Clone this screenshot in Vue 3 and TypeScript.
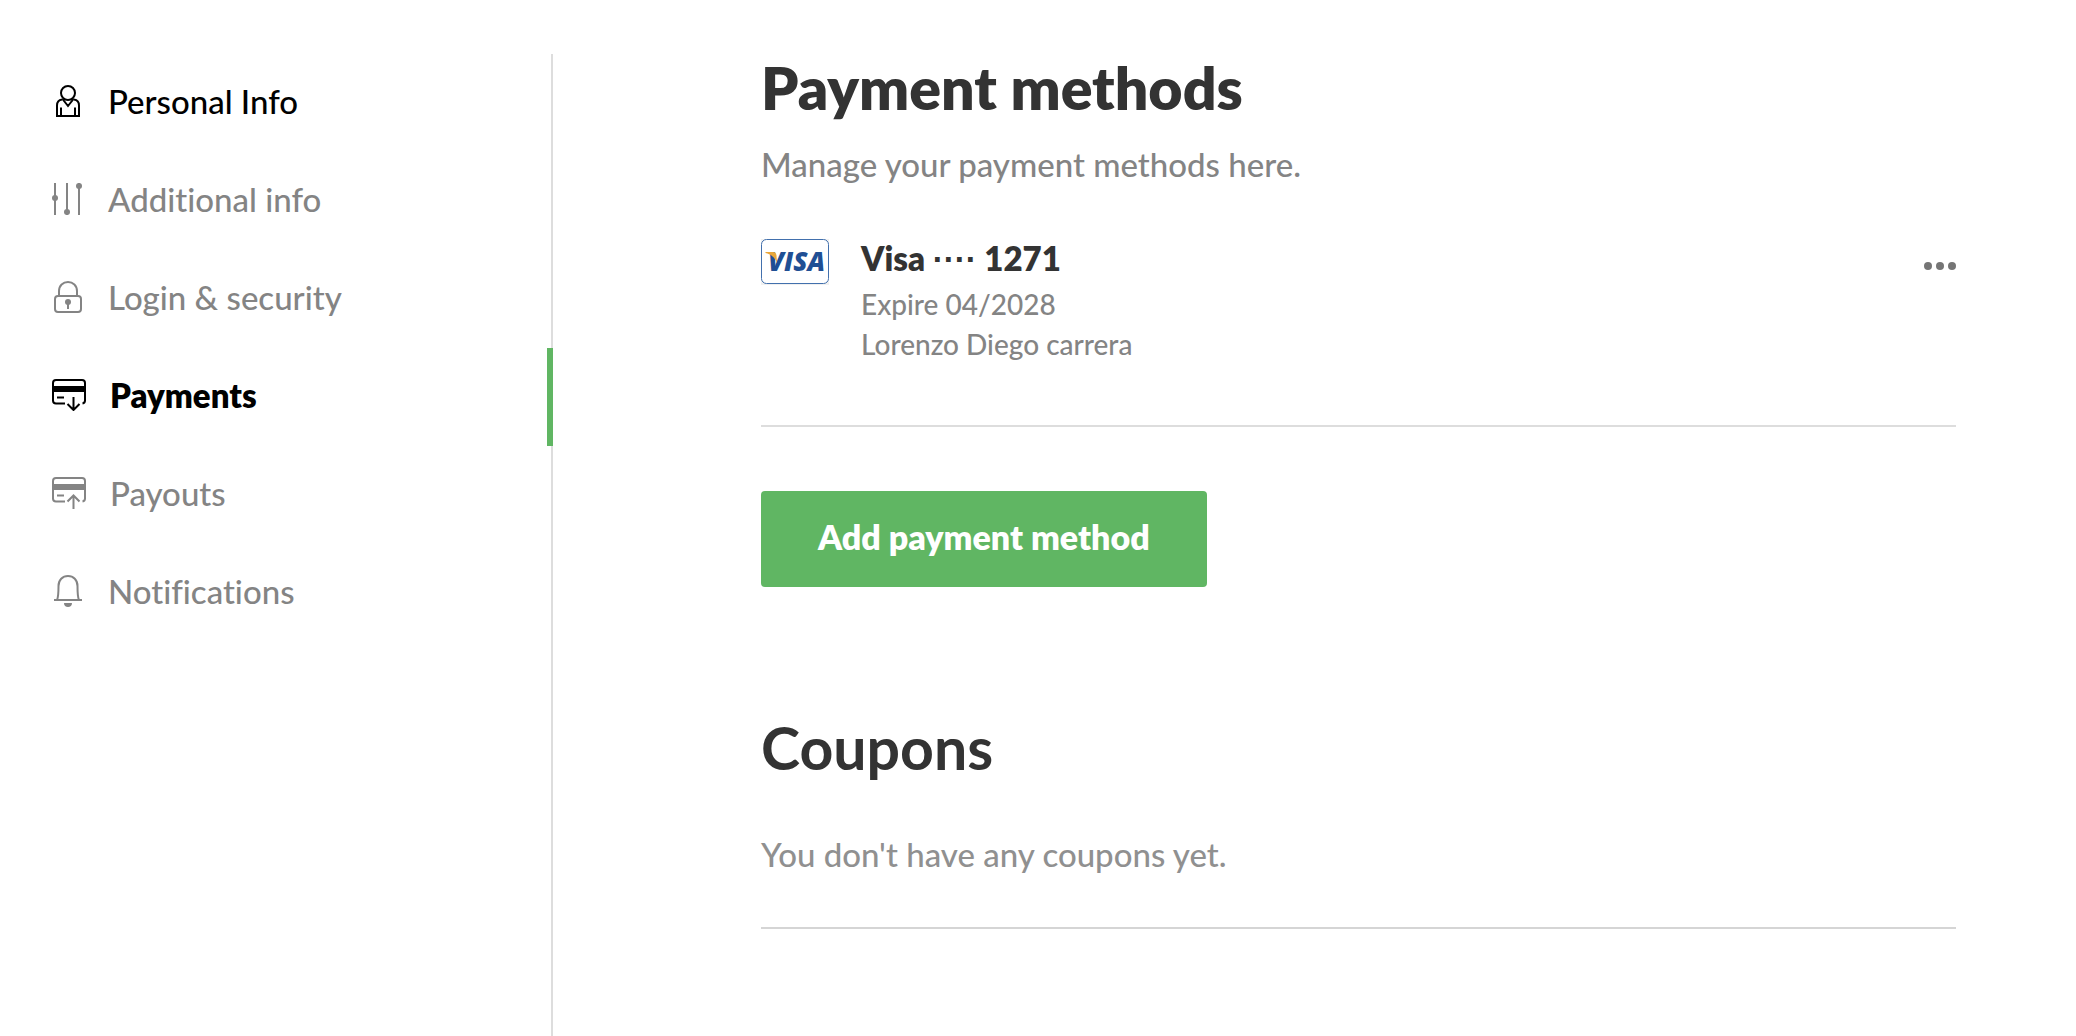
<script setup lang="ts">
import { ref } from 'vue'

type IconName = 'person' | 'sliders' | 'lock' | 'card-down' | 'card-up' | 'bell'

interface NavItem {
  label: string
  icon: IconName
  href: string
  dark?: boolean
}

const items: NavItem[] = [
  { label: 'Personal Info', icon: 'person', href: '#personal', dark: true },
  { label: 'Additional info', icon: 'sliders', href: '#additional' },
  { label: 'Login & security', icon: 'lock', href: '#security' },
  { label: 'Payments', icon: 'card-down', href: '#payments' },
  { label: 'Payouts', icon: 'card-up', href: '#payouts' },
  { label: 'Notifications', icon: 'bell', href: '#notifications' },
]

const active = ref('Payments')
</script>

<template>
  <div class="page">
    <nav class="sidebar" aria-label="Account">
      <a
        v-for="item in items"
        :key="item.label"
        :href="item.href"
        class="nav-item"
        :class="{ active: item.label === active, dark: item.dark }"
        @click.prevent="active = item.label"
      >
        <svg v-if="item.icon === 'person'" class="icon" viewBox="0 0 32 32" aria-hidden="true">
          <circle cx="16" cy="8" r="7" />
          <path d="M10 14.500C6.500 15 5 17.500 5 20.500V31H27V20.500C27 17.500 25.500 15 22 14.500M10.500 14L16 21L21.500 14M9 31V22.500M23 31V22.500" />
        </svg>
        <svg v-else-if="item.icon === 'sliders'" class="icon" viewBox="0 0 32 32" aria-hidden="true">
          <path d="M3 0V32M15 0V32M27 0V32" />
          <g class="solid">
            <circle cx="3" cy="15" r="3" />
            <circle cx="15" cy="29" r="3" />
            <circle cx="27" cy="3" r="3" />
          </g>
        </svg>
        <svg v-else-if="item.icon === 'lock'" class="icon" viewBox="0 0 32 32" aria-hidden="true">
          <rect x="3" y="15" width="26" height="16" rx="3" />
          <path d="M7 15V10C7 4.500 11 1 16 1S25 4.500 25 10V15M16 20V28" />
          <circle class="solid" cx="16" cy="21" r="3" />
        </svg>
        <svg v-else-if="item.icon === 'bell'" class="icon" viewBox="0 0 32 32" aria-hidden="true">
          <path d="M2 25H30M5 25C6.500 22 6.500 17 6.500 11C6.500 5 10.500 1 16 1S25.500 5 25.500 11C25.500 17 25.500 22 27 25" />
          <path class="solid" d="M12 28H20C20 30.500 18.500 32 16 32S12 30.500 12 28Z" />
        </svg>
        <svg v-else class="icon wide" viewBox="0 0 34 32" aria-hidden="true">
          <path d="M13 24.500H4C2.300 24.500 1 23.200 1 21.500V4C1 2.300 2.300 1 4 1H30C31.700 1 33 2.300 33 4V21.500C33 23 32 24.200 30.500 24.500M5 18.500H12" />
          <path class="solid" d="M1 7H33V13H1Z" />
          <path v-if="item.icon === 'card-down'" d="M21.500 18V31M15.500 25L21.500 31L27.500 25" />
          <path v-else d="M21.500 32V18.500M15.500 24.500L21.500 18.500L27.500 24.500" />
        </svg>
        <span>{{ item.label }}</span>
      </a>
    </nav>

    <main class="content">
      <section>
        <h1>Payment methods</h1>
        <p class="intro">Manage your payment methods here.</p>

        <article class="method">
          <svg class="brand" viewBox="0 0 68 46" role="img" aria-label="Visa card">
            <rect class="brand-back" width="68" height="46" />
            <rect class="brand-frame" x="0.500" y="0.500" width="67" height="44" rx="5" />
            <text class="brand-name" x="7" y="32">VISA</text>
            <path class="brand-wing" d="M4.500 13H12C14.500 13 15 14 15.500 16.500L16 24C14 18.500 10.500 15.500 4.500 14Z" />
          </svg>
          <div class="details">
            <h2>Visa <span class="mask">····</span> 1271</h2>
            <p>Expire 04/2028</p>
            <p>Lorenzo Diego carrera</p>
          </div>
          <button class="more" type="button" aria-label="More options">
            <i></i><i></i><i></i>
          </button>
        </article>

        <button class="add" type="button">Add payment method</button>
      </section>

      <section class="coupons">
        <h1>Coupons</h1>
        <p class="empty">You don't have any coupons yet.</p>
      </section>
    </main>
  </div>
</template>

<style>
body {
  margin: 0;
  background: #fff;
}
</style>

<style scoped>
.page {
  box-sizing: border-box;
  display: flex;
  min-height: 100vh;
  padding-top: 54px;
  font-family: Lato, "Liberation Sans", sans-serif;
  font-size: 33px;
  font-variant-ligatures: none;
  color: #333;
}

.sidebar {
  box-sizing: border-box;
  flex: none;
  width: 553px;
  border-right: 2px solid #ddd;
}

.nav-item {
  box-sizing: border-box;
  display: flex;
  align-items: center;
  gap: 24px;
  height: 98px;
  margin-right: -2px;
  padding: 0 0 4px 52px;
  border-right: 6px solid transparent;
  font-weight: 500;
  color: #848484;
  text-decoration: none;
}

.nav-item.dark {
  color: #000;
}

.nav-item.active {
  border-right-color: #60b663;
  font-weight: 800;
  color: #000;
}

.icon {
  width: 32px;
  height: 32px;
  fill: none;
  stroke: currentColor;
  stroke-width: 2;
}

.icon.wide {
  width: 34px;
}

.solid {
  fill: currentColor;
  stroke: none;
}

.content {
  flex: 1;
  padding: 0 120px 0 208px;
}

h1,
h2,
p {
  margin: 0;
}

h1 {
  font-size: 59px;
  font-weight: 800;
  line-height: 68px;
}

.intro,
.empty {
  font-weight: 500;
  line-height: 40px;
  color: #848484;
}

.intro {
  margin-top: 22px;
}

.method {
  display: flex;
  align-items: flex-start;
  margin-top: 55px;
  padding-bottom: 61px;
  border-bottom: 2px solid #ddd;
}

.brand {
  flex: none;
  width: 68px;
  height: 46px;
  margin-right: 32px;
}

.brand-back {
  fill: #f0f0f0;
}

.brand-frame {
  fill: #fff;
  stroke: #4270ad;
}

.brand-name {
  fill: #1f4f94;
  font: italic 800 26px "Open Sans", sans-serif;
}

.brand-wing {
  fill: #e9a63a;
}

.details {
  flex: 1;
}

h2 {
  margin-bottom: 7px;
  font-size: 33px;
  font-weight: 800;
  line-height: 38px;
}

.mask {
  font-family: "Liberation Sans", sans-serif;
  line-height: 1;
}

.details p {
  font-size: 28px;
  font-weight: 500;
  line-height: 40px;
  color: #848484;
}

.more {
  display: flex;
  gap: 4px;
  margin-top: 23px;
  padding: 0;
  border: 0;
  background: none;
}

.more i {
  width: 8px;
  height: 8px;
  border-radius: 50%;
  background: #757575;
}

.add {
  height: 96px;
  margin-top: 64px;
  padding: 0 57px 6px;
  border: 0;
  border-radius: 4px;
  background: #60b663;
  font: inherit;
  font-size: 34px;
  font-weight: 800;
  color: #fff;
}

.coupons {
  margin-top: 127px;
  padding-bottom: 53px;
  border-bottom: 2px solid #d5d5d5;
}

.coupons h1 {
  font-weight: 700;
}

.empty {
  margin-top: 52px;
  color: #909090;
}
</style>
